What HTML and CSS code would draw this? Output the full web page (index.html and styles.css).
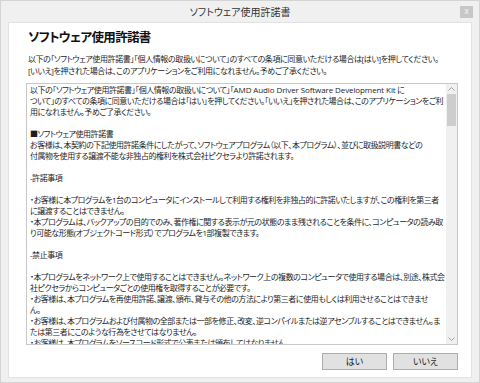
FILE: index.html
```html
<!DOCTYPE html>
<html lang="ja">
<head>
<meta charset="utf-8">
<title>ソフトウェア使用許諾書</title>
<link rel="stylesheet" href="styles.css">
</head>
<body>
<div class="window">
  <div class="titlebar">
    <span class="spacer"></span>
    <span class="title">ソフトウェア使用許諾書</span>
    <span class="close">x</span>
  </div>
  <div class="frame">
    <div class="content">
      <h1 class="heading">ソフトウェア使用許諾書</h1>
      <p class="intro">以下の「ソフトウェア使用許諾書」「個人情報の取扱いについて」のすべての条項に同意いただける場合は[はい]を押してください。<br>[いいえ]を押された場合は、このアプリケーションをご利用になれません。予めご了承ください。</p>
      <div class="box">
        <div class="text">
          <p>以下の「ソフトウェア使用許諾書」「個人情報の取扱いについて」「<span class="latin">AMD Audio Driver Software Development Kit</span> に<br>ついて」のすべての条項に同意いただける場合は「はい」を押してください。「いいえ」を押された場合は、このアプリケーションをご利<br>用になれません。予めご了承ください。</p>
          <p>■ソフトウェア使用許諾書<br>お客様は、本契約の下記使用許諾条件にしたがって、ソフトウェアプログラム（以下、本プログラム）、並びに取扱説明書などの<br>付属物を使用する譲渡不能な非独占的権利を株式会社ピクセラより許諾されます。</p>
          <p>-許諾事項</p>
          <p>・お客様に本プログラムを1台のコンピュータにインストールして利用する権利を非独占的に許諾いたしますが、この権利を第三者<br>に譲渡することはできません。<br>・本プログラムは、バックアップの目的でのみ、著作権に関する表示が元の状態のまま残されることを条件に、コンピュータの読み取<br>り可能な形態(オブジェクトコード形式）でプログラムを1部複製できます。</p>
          <p>-禁止事項</p>
          <p>・本プログラムをネットワーク上で使用することはできません。ネットワーク上の複数のコンピュータで使用する場合は、別途、株式会<br>社ピクセラからコンピュータごとの使用権を取得することが必要です。<br>・お客様は、本プログラムを再使用許諾、譲渡、頒布、貸与その他の方法により第三者に使用もしくは利用させることはできませ<br>ん。<br>・お客様は、本プログラムおよび付属物の全部または一部を修正、改変、逆コンパイルまたは逆アセンブルすることはできません。ま<br>たは第三者にこのような行為をさせてはなりません。<br>・お客様は、本プログラムをソースコード形式で公表または頒布してはなりません。</p>
        </div>
        <div class="scrollbar">
          <div class="arrow">
            <svg width="7" height="4" viewBox="0 0 7 4"><path d="M0.5 3.5 L3.5 0.5 L6.5 3.5" fill="none" stroke="#a0a0a0" stroke-width="1"/></svg>
          </div>
          <div class="thumb"></div>
          <div class="track"></div>
          <div class="arrow">
            <svg width="7" height="4" viewBox="0 0 7 4"><path d="M0.5 0.5 L3.5 3.5 L6.5 0.5" fill="none" stroke="#a0a0a0" stroke-width="1"/></svg>
          </div>
        </div>
      </div>
      <div class="buttons">
        <button class="btn">はい</button>
        <button class="btn">いいえ</button>
      </div>
    </div>
  </div>
</div>
</body>
</html>
```

FILE: styles.css
```css
html, body {
  margin: 0;
  padding: 0;
}
html {
  overflow: hidden;
}
body {
  width: 480px;
  height: 383px;
  overflow: hidden;
  background: #f0f0f0;
  font-family: "Noto Sans CJK JP", "Noto Sans", sans-serif;
  font-feature-settings: "palt";
  color: #1e1e1e;
}
.window {
  display: flex;
  flex-direction: column;
  height: 383px;
  box-sizing: border-box;
  border: 1px solid #d4d4d4;
  background: #f0f0f0;
  overflow: hidden;
}
.titlebar {
  height: 21px;
  display: grid;
  grid-template-columns: 1fr auto 1fr;
  align-items: center;
}
.title {
  font-size: 10px;
  color: #333;
  line-height: 21px;
}
.close {
  justify-self: end;
  margin-right: 6px;
  width: 13px;
  height: 12px;
  background: #c7c7c7;
  color: #f4f4f4;
  font-family: "DejaVu Sans", sans-serif;
  font-size: 8px;
  line-height: 11px;
  text-align: center;
}
.frame {
  flex: 1;
  display: flex;
  min-width: 0;
  padding: 0 7px 5px 7px;
}
.content {
  flex: 1;
  min-width: 0;
  overflow: hidden;
  background: #fff;
  border: 1px solid #e2e2e2;
  padding: 5px 13px 7px 17px;
  display: flex;
  flex-direction: column;
}
.heading {
  margin: 0 0 0 2px;
  font-size: 12.5px;
  letter-spacing: -0.65px;
  line-height: 17px;
  font-weight: bold;
  color: #111;
}
.intro {
  margin: 8px 0 6px 2px;
  font-family: "Open Sans", "Noto Sans CJK JP", sans-serif;
  font-size: 8px;
  letter-spacing: -0.4px;
  line-height: 12px;
  white-space: nowrap;
  overflow: hidden;
}
.box {
  height: 262px;
  min-width: 0;
  box-sizing: border-box;
  border: 1px solid #c8c8c8;
  display: flex;
  overflow: hidden;
}
.text {
  flex: 1;
  min-width: 0;
  overflow: hidden;
  padding: 0 0 0 3px;
  font-family: "Open Sans", "Noto Sans CJK JP", sans-serif;
  font-size: 8px;
  letter-spacing: -0.45px;
  line-height: 11px;
  white-space: nowrap;
}
.text p {
  margin: 0 0 11px 0;
}
.latin {
  letter-spacing: -0.1px;
}
.scrollbar {
  width: 11px;
  flex: none;
  background: #f0f0f0;
  display: flex;
  flex-direction: column;
}
.arrow {
  height: 10px;
  display: flex;
  align-items: center;
  justify-content: center;
}
.thumb {
  height: 32px;
  background: #cdcdcd;
  margin: 0 1px;
}
.track {
  flex: 1;
}
.buttons {
  display: flex;
  justify-content: flex-end;
  gap: 6px;
  margin-top: 8px;
}
.btn {
  width: 65px;
  height: 17px;
  box-sizing: border-box;
  border: 1px solid #adadad;
  background: #e1e1e1;
  font-family: "Noto Sans CJK JP", sans-serif;
  font-feature-settings: "palt";
  font-size: 9px;
  line-height: 14px;
  color: #222;
  padding: 0;
}
```
